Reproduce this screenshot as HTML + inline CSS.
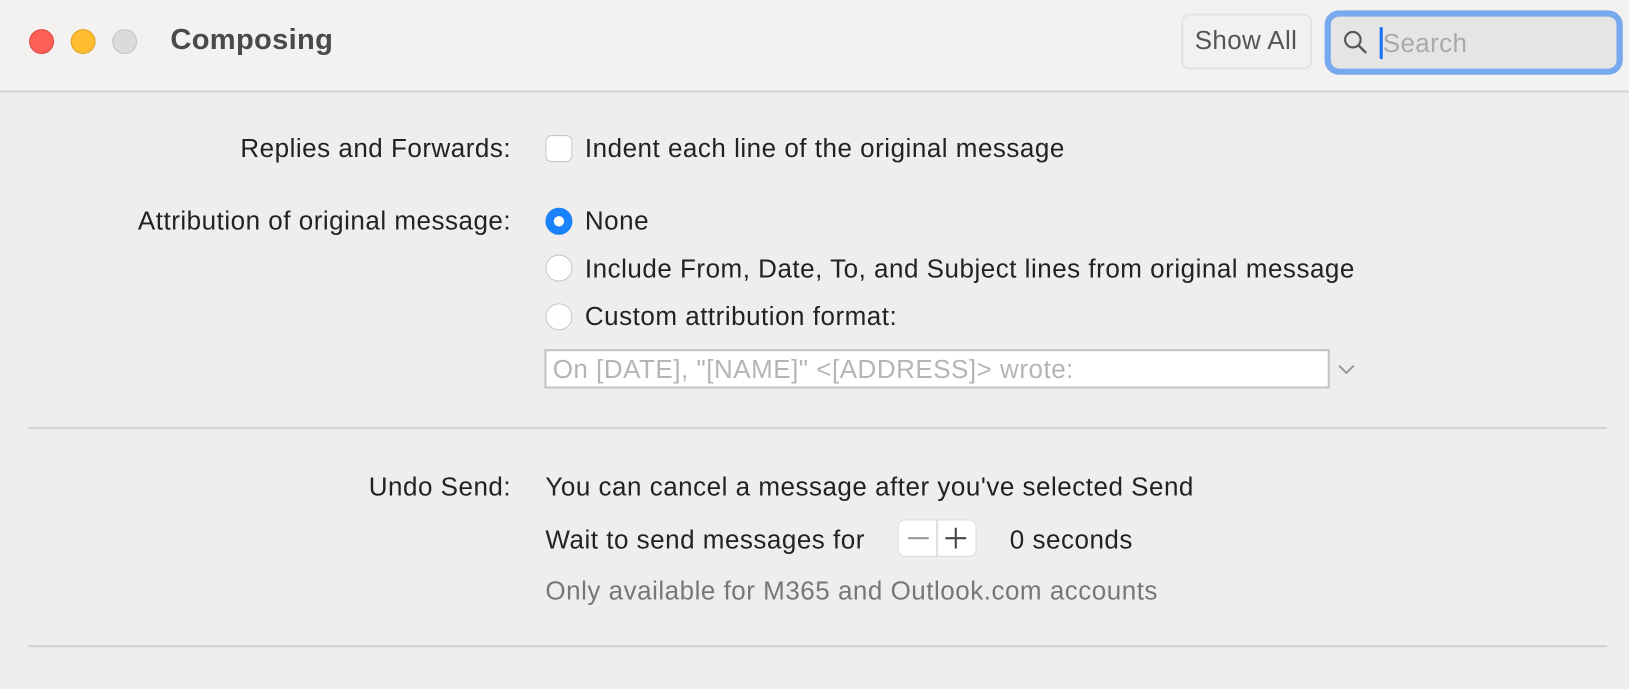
<!DOCTYPE html>
<html><head><meta charset="utf-8"><style>
*{margin:0;padding:0;box-sizing:border-box}
html,body{width:1629px;height:689px;overflow:hidden;background:#efeeec}
#w{width:1568px;height:663px;transform:scale(1.0389);transform-origin:0 0;position:relative;font-family:"Liberation Sans",sans-serif;color:#222}
.title{position:absolute;left:0;top:0;width:1640px;height:89px;background:#f3f2f1;border-bottom:2px solid #d6d5d3}
.dot{position:absolute;top:28px;width:24px;height:24px;border-radius:50%}
.t{position:absolute;font-size:25px;letter-spacing:0.5px;white-space:nowrap;line-height:1}
.r{text-align:right;right:1076px}
.cb{position:absolute;left:525px;width:26px;height:26px;border:1px solid #c9c8c7;border-radius:6px;background:#fff}
.rd{position:absolute;left:525px;width:26px;height:26px;border:1px solid #c9c8c7;border-radius:50%;background:#fff}
.hr{position:absolute;left:27px;width:1520px;height:2px;background:#d3d2d0}
</style></head><body><div id="w">
<div class="title">
<div class="dot" style="left:28px;background:#fe5f57;border:1px solid #e0443e"></div>
<div class="dot" style="left:68px;background:#febc2e;border:1px solid #dea123"></div>
<div class="dot" style="left:108px;background:#dcdbda;border:1px solid #c5c4c3"></div>
<div class="t" style="left:164px;top:24px;font-size:28px;letter-spacing:0.3px;font-weight:bold;color:#4a4a4a">Composing</div>
<div style="position:absolute;left:1137px;top:13px;width:126px;height:54px;border:2px solid #e4e3e2;border-radius:8px;background:#f2f1f0"></div>
<div class="t" style="left:1150px;top:27px;color:#555;letter-spacing:0.35px">Show All</div>
<div style="position:absolute;left:1275px;top:10px;width:287px;height:62px;border:6px solid #78a9ef;border-radius:14px;background:#e6e5e4"></div>
<svg style="position:absolute;left:1291px;top:27px" width="28" height="28" viewBox="0 0 30 30"><circle cx="12" cy="12" r="8" fill="none" stroke="#555" stroke-width="2.2"/><line x1="18" y1="18" x2="25" y2="25" stroke="#555" stroke-width="2.4" stroke-linecap="round"/></svg>
<div style="position:absolute;left:1328px;top:26px;width:3px;height:31px;background:#1a73f5;border-radius:2px"></div>
<div class="t" style="left:1331px;top:30px;color:#aaa;letter-spacing:0.35px">Search</div>
</div>

<div class="t r" style="top:131px">Replies and Forwards:</div>
<div class="cb" style="top:130px"></div>
<div class="t" style="left:563px;top:131px">Indent each line of the original message</div>

<div class="t r" style="top:201px">Attribution of original message:</div>
<div class="rd" style="top:200px;background:#1a82fb;border-color:#1a82fb"></div>
<div style="position:absolute;left:533px;top:208px;width:10px;height:10px;border-radius:50%;background:#fff"></div>
<div class="t" style="left:563px;top:201px">None</div>
<div class="rd" style="top:245px"></div>
<div class="t" style="left:563px;top:247px">Include From, Date, To, and Subject lines from original message</div>
<div class="rd" style="top:292px"></div>
<div class="t" style="left:563px;top:293px">Custom attribution format:</div>
<div style="position:absolute;left:524px;top:336px;width:756px;height:38px;border:2px solid #c4c3c2;background:#fff"></div>
<div class="t" style="left:532px;top:344px;color:#b5b5b5">On [DATE], "[NAME]" &lt;[ADDRESS]&gt; wrote:</div>
<svg style="position:absolute;left:1286px;top:348px" width="20" height="14"><path d="M3 4l7 7 7-7" fill="none" stroke="#999" stroke-width="2"/></svg>

<div class="hr" style="top:411px"></div>

<div class="t r" style="top:457px">Undo Send:</div>
<div class="t" style="left:525px;top:457px">You can cancel a message after you've selected Send</div>
<div class="t" style="left:525px;top:508px">Wait to send messages for</div>
<div style="position:absolute;left:864px;top:500px;width:76px;height:36px;border-radius:7px;background:#fff;border:1px solid #dedddc"></div>
<div style="position:absolute;left:901px;top:500px;width:2px;height:36px;background:#e0dfde"></div>
<svg style="position:absolute;left:864px;top:500px" width="76" height="36"><line x1="10" y1="18" x2="30" y2="18" stroke="#999" stroke-width="2"/><line x1="46" y1="18" x2="66" y2="18" stroke="#444" stroke-width="2"/><line x1="56" y1="8" x2="56" y2="28" stroke="#444" stroke-width="2"/></svg>
<div class="t" style="left:972px;top:508px">0 seconds</div>
<div class="t" style="left:525px;top:557px;color:#777">Only available for M365 and Outlook.com accounts</div>

<div class="hr" style="top:621px"></div>
</div></body></html>
